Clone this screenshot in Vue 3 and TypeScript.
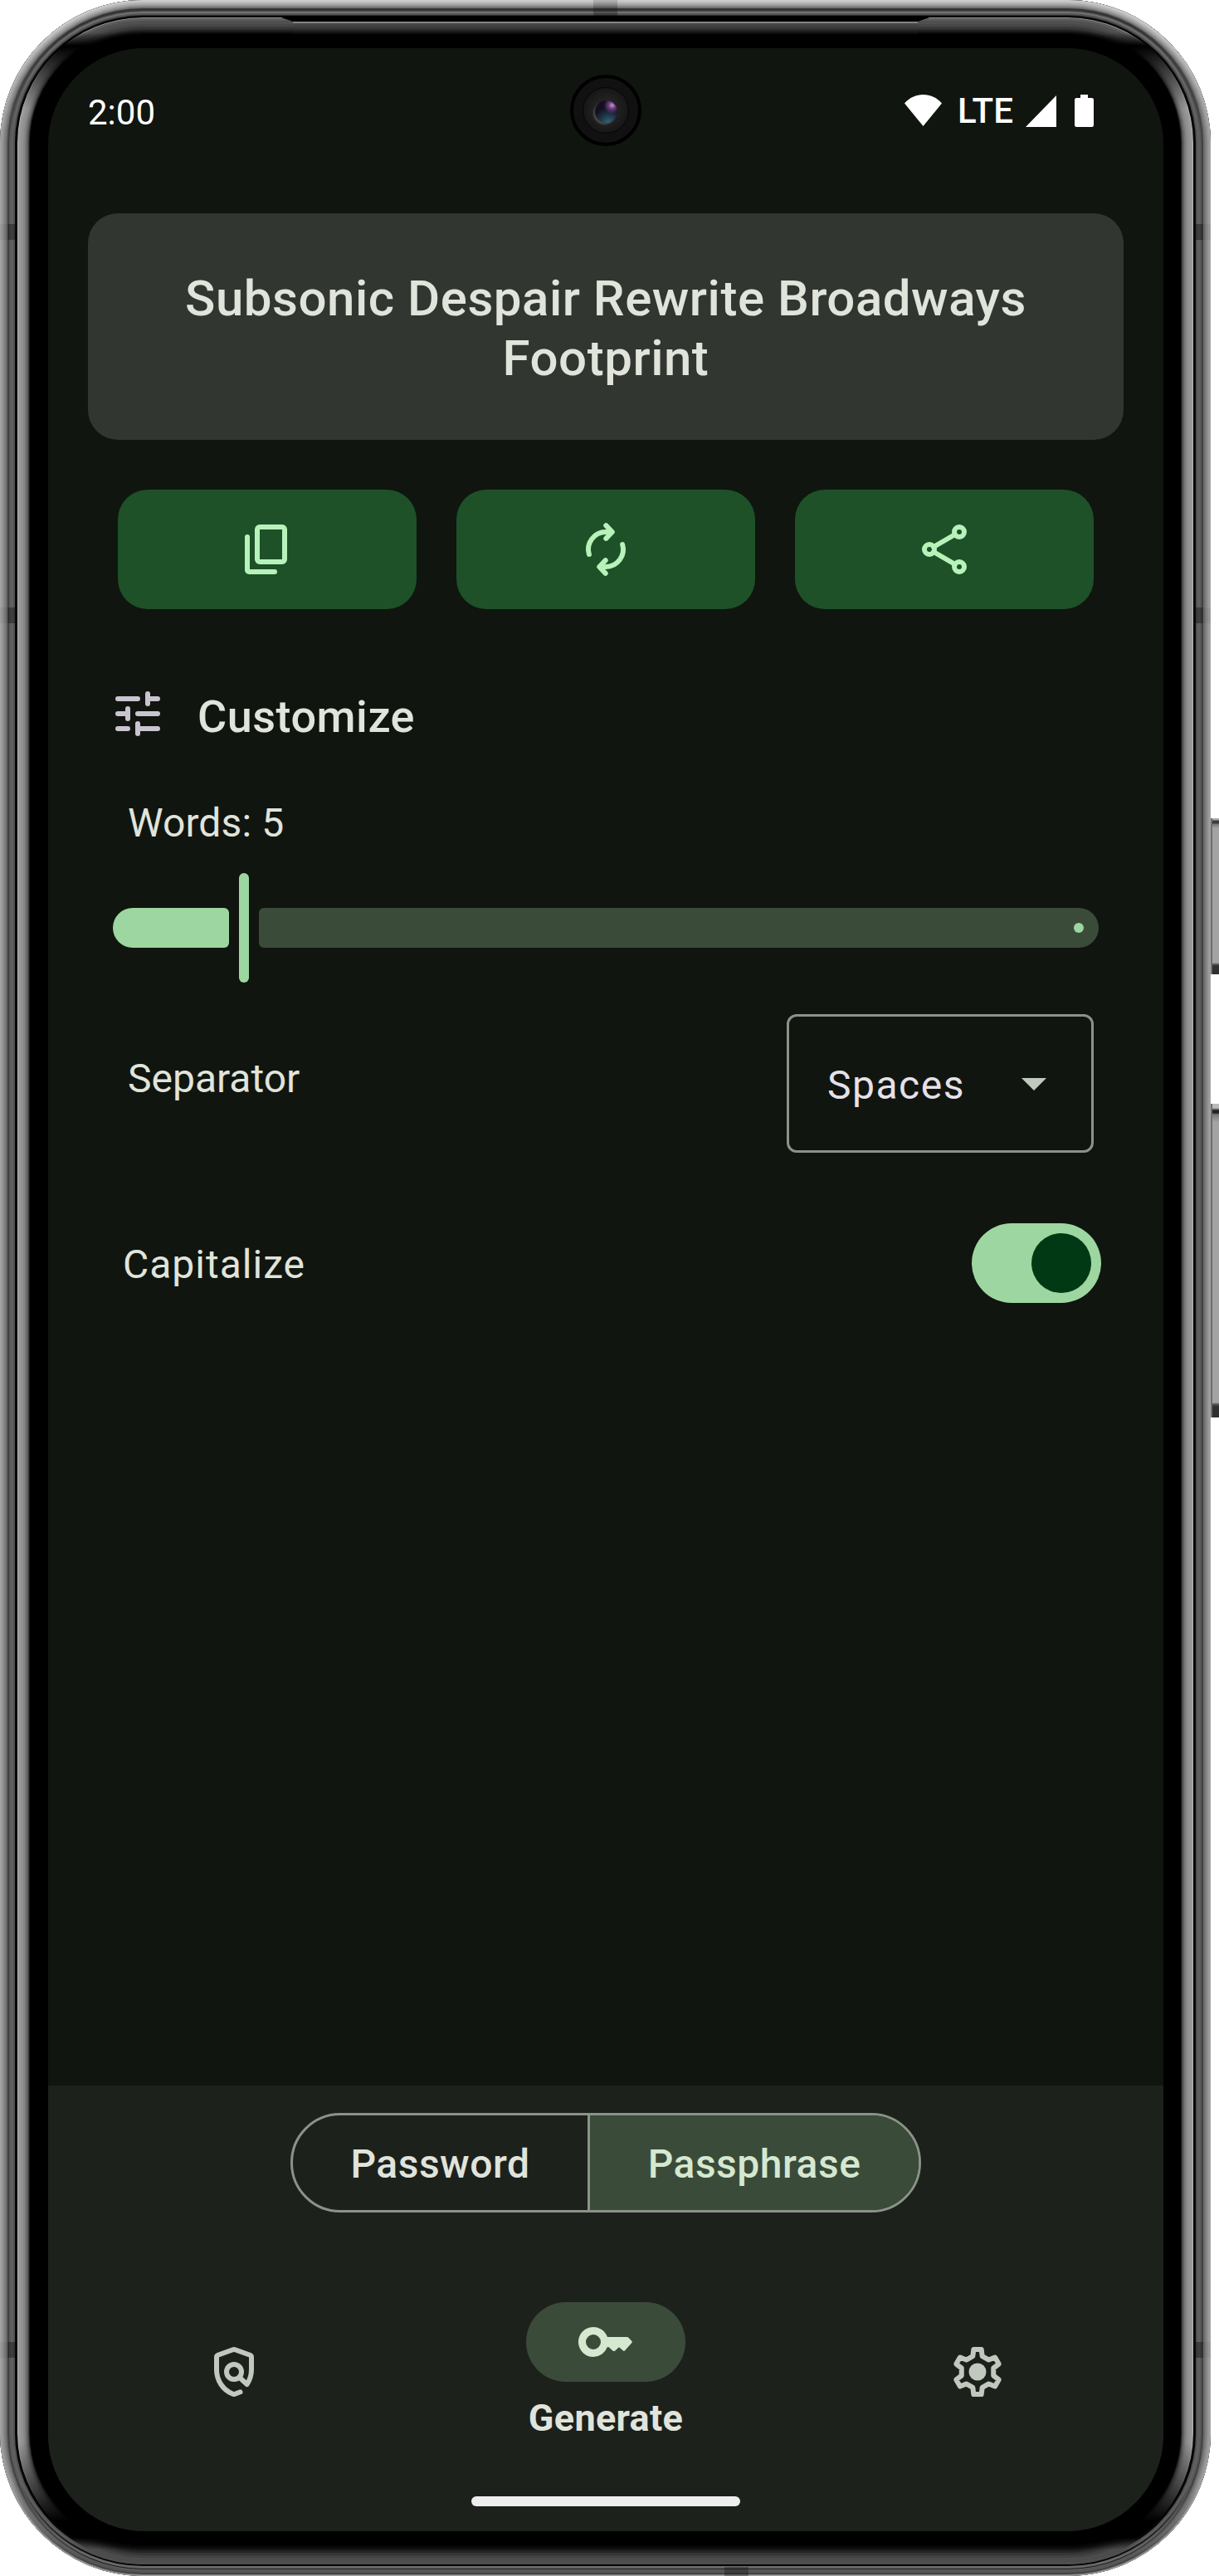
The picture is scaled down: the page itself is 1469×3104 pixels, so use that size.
<script setup lang="ts">
import { ref } from 'vue'

type Ring = [number, string]

/* Each ring is [distance from the edge, colour]; the first one is the outermost. */
const shade = (rings: Ring[]): string =>
  rings.map(([d, c]) => `inset 0 0 0 ${d}px ${c}`).join(',')

const sideRings = shade([
  [1, '#a6a6a6'], [3, '#9c9c9c'], [5, '#8e8e8e'], [7, '#7e7e7e'], [9, '#6a6a6a'],
  [11, '#414141'], [13, '#585858'], [16, '#606060'], [18, '#525252'], [21, '#060606'],
])
const sideGlow = shade([
  [1, '#b4b4b4'], [4, '#9a9a9a'], [7, '#929292'], [9, '#888'], [11, '#787878'],
  [13, '#5e5e5e'], [14, '#3c3c3c'], [15, '#1c1c1c'],
])
const topRings = shade([
  [2, '#cbcbcb'], [4, '#bcbcbc'], [6, '#a9a9a9'], [8, '#929292'], [10, '#727272'],
  [13, '#353535'], [14, '#505050'], [16, '#707070'], [18, '#555'], [19, '#2c2c2c'], [21, '#050505'],
])
const topGlow = shade([
  [1, '#929292'], [4, '#5c5c5c'], [8, '#505050'], [11, '#474747'], [14, '#393939'],
  [16, '#292929'], [18, '#191919'], [20, '#0a0a0a'],
])
const bottomRings = shade([
  [1, '#a5a5a5'], [2, '#7a7a7a'], [4, '#444'], [7, '#565656'], [8, '#5c5c5c'],
  [9, '#1c1c1c'], [12, '#686868'], [14, '#060606'],
])
const bottomGlow = shade([
  [3, '#4e4e4e'], [8, '#4c4c4c'], [11, '#424242'], [14, '#353535'], [17, '#242424'],
  [20, '#131313'], [23, '#080808'],
])

const words = ref(5)
const separator = ref('Spaces')
const capitalize = ref(true)
const mode = ref<'Password' | 'Passphrase'>('Passphrase')
const passphrase = ref('Subsonic Despair Rewrite Broadways Footprint')

/* Outline of the six-toothed settings gear, one tooth per 60 degrees. */
const tooth: [number, number][] = [[-1.9, -6.3], [-1.55, -9], [1.55, -9], [1.9, -6.3]]
const gear = Array.from({ length: 6 }, (_, k) => {
  const a = (k * Math.PI) / 3
  return tooth
    .map(([x, y]) => {
      const px = 12 + x * Math.cos(a) - y * Math.sin(a)
      const py = 12 + x * Math.sin(a) + y * Math.cos(a)
      return `${px.toFixed(2)},${py.toFixed(2)}`
    })
    .join(' ')
}).join(' ')
</script>

<template>
  <div class="stage">
    <div class="volume key-a"></div>
    <div class="volume key-b"></div>
    <div class="phone">
      <div class="ring" :style="{ boxShadow: sideRings }"></div>
      <div class="ring fade-top" :style="{ boxShadow: topRings }"></div>
      <div class="ring fade-bottom" :style="{ boxShadow: bottomRings }"></div>
      <div class="glow glow-side" :style="{ boxShadow: sideGlow }"></div>
      <div class="glow glow-top" :style="{ boxShadow: topGlow }"></div>
      <div class="glow glow-bottom" :style="{ boxShadow: bottomGlow }"></div>
      <div class="speaker"></div>
      <i class="band l b1"></i><i class="band l b2"></i><i class="band l b3"></i>
      <i class="band r b1"></i><i class="band r b2"></i><i class="band r b3"></i>
      <i class="band t"></i><i class="band b"></i>

      <div class="screen">
        <div class="camera"><div class="camera-ring"><div class="lens"></div></div></div>

        <header class="status">
          <span class="clock">2:00</span>
          <div class="signals">
            <svg class="wifi" width="45" height="38" viewBox="0 0 45 38"><path d="M0 10.5C6 3.5 14 0 22.5 0S39 3.500 45 10.500L22.500 38Z" fill="#fff" /></svg>
            <span class="lte">LTE</span>
            <svg class="cell" width="37" height="38" viewBox="0 0 37 38"><path d="M37 0V38H0Z" fill="#fff" /></svg>
            <svg class="battery" width="23" height="39" viewBox="0 0 23 39"><path d="M7 0h9v4h4.500a2.500 2.500 0 0 1 2.500 2.500v30a2.500 2.500 0 0 1-2.500 2.500h-18A2.500 2.500 0 0 1 0 36.500v-30A2.500 2.500 0 0 1 2.500 4H7Z" fill="#fff" /></svg>
          </div>
        </header>

        <main class="content">
          <section class="card">{{ passphrase }}</section>

          <div class="actions">
            <button class="action" aria-label="Copy">
              <svg viewBox="0 0 24 24" class="icon"><rect x="8" y="3" width="11" height="14" rx="1" /><path d="M4 7v13.300a.7.7 0 0 0 .7.7H15" /></svg>
            </button>
            <button class="action" aria-label="Regenerate">
              <svg viewBox="0 0 24 24" class="icon"><path d="M5.300 14A7 7 0 0 1 12 5h2.200M12.100 2.400 14.600 5l-2.500 2.600M18.700 10A7 7 0 0 1 12 19H9.800M11.900 21.600 9.400 19l2.500-2.600" /></svg>
            </button>
            <button class="action" aria-label="Share">
              <svg viewBox="0 0 24 24" class="icon"><circle cx="18" cy="5" r="2" /><circle cx="6" cy="12" r="2" /><circle cx="18" cy="19" r="2" /><path d="m7.700 11 8.600-5M7.700 13l8.600 5" /></svg>
            </button>
          </div>

          <div class="heading">
            <svg viewBox="0 0 24 24" class="icon tune"><path d="M4 6h8M16 4v4M16 6h4M4 12h4M8 10v4M12 12h8M4 18h4M12 16v4M12 18h8" /></svg>
            <h2>Customize</h2>
          </div>

          <p class="words">Words: {{ words }}</p>
          <div class="slider">
            <div class="active"></div>
            <div class="handle"></div>
            <div class="rest"><i class="stop"></i></div>
          </div>

          <div class="row separator">
            <span>Separator</span>
            <div class="select">
              <span>{{ separator }}</span>
              <svg width="30" height="15" viewBox="0 0 30 15"><path d="M0 0h30L15 15Z" fill="#c1c9be" /></svg>
            </div>
          </div>

          <div class="row capitalize">
            <span>Capitalize</span>
            <div class="switch" :class="{ on: capitalize }"><i></i></div>
          </div>
        </main>

        <footer class="bottom">
          <div class="segments">
            <button class="segment first" :class="{ chosen: mode === 'Password' }" @click="mode = 'Password'">Password</button>
            <button class="segment" :class="{ chosen: mode === 'Passphrase' }" @click="mode = 'Passphrase'">Passphrase</button>
          </div>
          <nav class="nav">
            <div class="tab">
              <svg viewBox="0 0 24 24" class="icon muted"><path d="M14.500 20.100 12.600 20.850Q12 21.100 11.400 20.850C7.500 19.200 5 15.500 5 11.100V6.100q0-.6.600-.85L11.600 3.100q.4-.15.8 0L18.400 5.250q.6.250.6.850v5c0 2.200-.65 4.200-1.800 5.900L14.400 14.400" /><circle cx="12" cy="12" r="3" /></svg>
            </div>
            <div class="tab current">
              <div class="pill">
                <svg viewBox="0 0 24 24" class="icon key"><path fill-rule="evenodd" d="M7 18a6 6 0 1 1 5.650-8H20.500q.4 0 .7.300l1.200 1.300q.4.400 0 .85l-2.700 3q-.4.400-.8 0L17.300 14.100l-1.600 1.450q-.4.300-.8 0L13.200 14.100H12.600A6 6 0 0 1 7 18Zm0-3a3 3 0 1 0 0-6 3 3 0 0 0 0 6Z" /></svg>
              </div>
              <span>Generate</span>
            </div>
            <div class="tab">
              <svg viewBox="0 0 24 24" class="icon muted"><polygon :points="gear" /><circle class="hub" cx="12" cy="12" r="3.500" /></svg>
            </div>
          </nav>
          <div class="home"></div>
        </footer>
      </div>
    </div>
  </div>
</template>

<style>
body { margin: 0; background: #fff; }
</style>

<style scoped>
* { box-sizing: border-box; }
.stage {
  position: relative;
  width: 1469px;
  height: 3104px;
  overflow: hidden;
  background: #fff;
  font-family: Roboto, sans-serif;
  color: #e0e4db;
}
.phone {
  position: relative;
  width: 1459px;
  height: 3104px;
  padding: 58px 57px 54px 58px;
  border-radius: 172px;
  background: #000;
  overflow: hidden;
}
.ring { position: absolute; inset: 0; border-radius: 172px; }
.fade-top { mask-image: linear-gradient(#000 0, #000 30px, transparent 170px); }
.fade-bottom { mask-image: linear-gradient(to top, #000 0, #000 20px, transparent 110px); }
.glow { position: absolute; border-radius: 151px; inset: 21px; }
.glow-side { mask-image: linear-gradient(transparent 35px, #000 110px, #000 calc(100% - 140px), transparent calc(100% - 45px)); }
.glow-top { mask-image: linear-gradient(#000 18px, transparent 34px); }
.glow-bottom { inset: 21px 21px 14px; mask-image: linear-gradient(to top, #000 18px, transparent 32px); }
.speaker {
  position: absolute;
  left: 336px;
  top: 20px;
  width: 787px;
  height: 22px;
  background: linear-gradient(#000 0 6px, #848484 6px 7.500px, #4c4c4c 8px, #383838 14px, #000 22px);
  clip-path: polygon(0 0, 100% 0, calc(100% - 17px) 6px, calc(100% - 17px) 100%, 17px 100%, 17px 6px);
}
.band { position: absolute; background: rgba(0, 0, 0, .28); }
.band.l, .band.r { width: 18px; height: 19px; }
.band.l { left: 0; background: linear-gradient(to right, rgba(0, 0, 0, .05) 9px, rgba(0, 0, 0, .35) 10px); }
.band.r { right: 0; background: linear-gradient(to left, rgba(0, 0, 0, .05) 9px, rgba(0, 0, 0, .35) 10px); }
.b1 { top: 270px; }
.b2 { top: 732px; }
.b3 { top: 2822px; }
.band.t { left: 715px; top: 0; width: 29px; height: 19px; background: linear-gradient(rgba(0, 0, 0, .12), rgba(0, 0, 0, .3)); }
.band.b { left: 873px; bottom: 0; width: 29px; height: 11px; }
.volume {
  position: absolute;
  left: 1450px;
  width: 19px;
  box-shadow: inset 11px 0 0 #6d6d6d;
}
.key-a { top: 986px; height: 188px; background: linear-gradient(#aaa 0 2px, #3a3a3a 3px 6px, #777 7px, #a3a3a3 12px 174px, #555 176px, #303030 178px); }
.key-b { top: 1330px; height: 378px; background: linear-gradient(#bbb 0 5px, #222 8px 11px, #777 13px, #a3a3a3 22px 360px, #555 362px, #303030 365px); }

.screen {
  position: relative;
  display: flex;
  flex-direction: column;
  width: 1344px;
  height: 2992px;
  border-radius: 116px;
  overflow: hidden;
  background: #10150f;
}
.camera {
  position: absolute;
  left: 629px;
  top: 32px;
  display: grid;
  place-items: center;
  width: 86px;
  height: 86px;
  border: 4px solid #000;
  border-radius: 50%;
  background: #111;
}
.camera-ring {
  display: grid;
  place-items: center;
  width: 56px;
  height: 56px;
  border: 1.500px solid #050505;
  border-radius: 50%;
  background: radial-gradient(circle at 50% 50%, #222 0 35%, #151515 75%, #1a1a1a);
}
.lens {
  width: 27px;
  height: 27px;
  margin-top: 3px;
  border-radius: 50%;
  background: radial-gradient(circle at 76% 22%, #c896d4 0, #6d3c80 14%, transparent 34%), radial-gradient(circle at 60% 100%, #35657c 0, #1c3343 34%, transparent 60%), #150e20;
  box-shadow: -2px 2px 2px #484848;
}

.status {
  display: flex;
  justify-content: space-between;
  align-items: center;
  height: 155px;
  padding: 0 84px 0 48px;
  color: #fff;
  font-size: 42px;
  line-height: 48px;
}
.signals { display: flex; align-items: center; height: 48px; }
.wifi { margin-right: 19px; margin-top: -5px; }
.lte { margin-top: -4px; margin-right: 11px; width: 71px; font-weight: 500; font-size: 42px; }
.cell { margin-right: 22px; margin-top: -4px; }
.battery { margin-top: -4px; }

.content { padding: 44px 48px 0; }
.card {
  height: 273px;
  padding: 67px 96px 0;
  border-radius: 36px;
  background: #313630;
  font-size: 60px;
  font-weight: 500;
  line-height: 72px;
  letter-spacing: .52px;
  text-align: center;
}
.actions { display: flex; gap: 48px; margin-top: 60px; padding: 0 36px; }
.action {
  display: grid;
  place-items: center;
  flex: 1;
  height: 144px;
  padding: 0;
  border: 0;
  border-radius: 36px;
  background: #1e5128;
  color: #b8f2bb;
}
.icon {
  display: block;
  width: 72px;
  height: 72px;
  fill: none;
  stroke: currentColor;
  stroke-width: 2;
  stroke-linecap: round;
  stroke-linejoin: round;
}
.heading { display: flex; align-items: center; gap: 36px; margin-top: 90px; padding-left: 24px; height: 72px; }
.tune { color: #cac4d0; }
h2 { margin: 7px 0 0; font-size: 54px; font-weight: 500; line-height: 64px; letter-spacing: .5px; }
.words { margin: 60px 0 0; padding-left: 48px; font-size: 48px; line-height: 72px; letter-spacing: .1px; }
.slider { display: flex; align-items: center; gap: 12px; width: 1188px; height: 132px; margin: 24px 0 0 30px; }
.active { width: 140px; height: 48px; border-radius: 24px 6px 6px 24px; background: #9dd6a0; }
.handle { width: 12px; height: 132px; border-radius: 6px; background: #9dd6a0; }
.rest { display: flex; align-items: center; justify-content: flex-end; flex: 1; height: 48px; padding-right: 18px; border-radius: 6px 24px 24px 6px; background: #3b4b39; }
.stop { width: 12px; height: 12px; border-radius: 50%; background: #9dd6a0; }
.row { display: flex; justify-content: space-between; align-items: center; font-size: 48px; line-height: 56px; }
.separator { height: 167px; margin-top: 38px; padding: 0 36px 0 48px; }
.separator > span { margin-top: -12px; }
.select {
  display: flex;
  align-items: center;
  justify-content: space-between;
  width: 370px;
  height: 167px;
  padding: 4px 54px 0 46px;
  border: 3px solid #8b9388;
  border-radius: 12px;
  color: #e6e0e9;
  letter-spacing: 1.500px;
}
.select svg { margin-top: -2px; }
.capitalize { height: 96px; margin-top: 85px; padding: 0 27px 0 42px; letter-spacing: 1px; }
.capitalize > span { margin-top: 3px; }
.switch { display: flex; align-items: center; width: 156px; height: 96px; padding: 12px; border-radius: 48px; background: #3b4b39; }
.switch.on { justify-content: flex-end; background: #9dd6a0; }
.switch i { width: 72px; height: 72px; border-radius: 50%; background: #003914; }

.bottom {
  display: flex;
  flex-direction: column;
  align-items: center;
  height: 537px;
  margin-top: auto;
  padding-top: 33px;
  background: #1d211c;
}
.segments { display: flex; width: 760px; height: 120px; border: 3px solid #8b9388; border-radius: 60px; overflow: hidden; }
.segment {
  flex: 1;
  padding: 3px 0 0;
  border: 0;
  background: none;
  color: #e0e4db;
  font: 500 48px/60px Roboto, sans-serif;
  letter-spacing: .5px;
}
.segment.first { flex: 0 0 358px; border-right: 3px solid #8b9388; }
.segment.chosen { background: #3b4b39; color: #d5e8d0; }
.nav { display: flex; width: 100%; height: 168px; margin-top: 108px; }
.tab { display: flex; flex: 1; flex-direction: column; align-items: center; justify-content: center; }
.tab.current { justify-content: flex-start; font-size: 45px; font-weight: 700; line-height: 48px; letter-spacing: .3px; }
.tab.current span { margin-top: 20px; }
.pill { display: grid; place-items: center; width: 192px; height: 96px; border-radius: 48px; background: #3b4b39; }
.key { fill: #d5e8d0; stroke: none; }
.muted { color: #c1c9be; }
.hub { fill: currentColor; stroke: none; }
.home { width: 324px; height: 12px; margin-top: 66px; border-radius: 6px; background: #eee; }
</style>
